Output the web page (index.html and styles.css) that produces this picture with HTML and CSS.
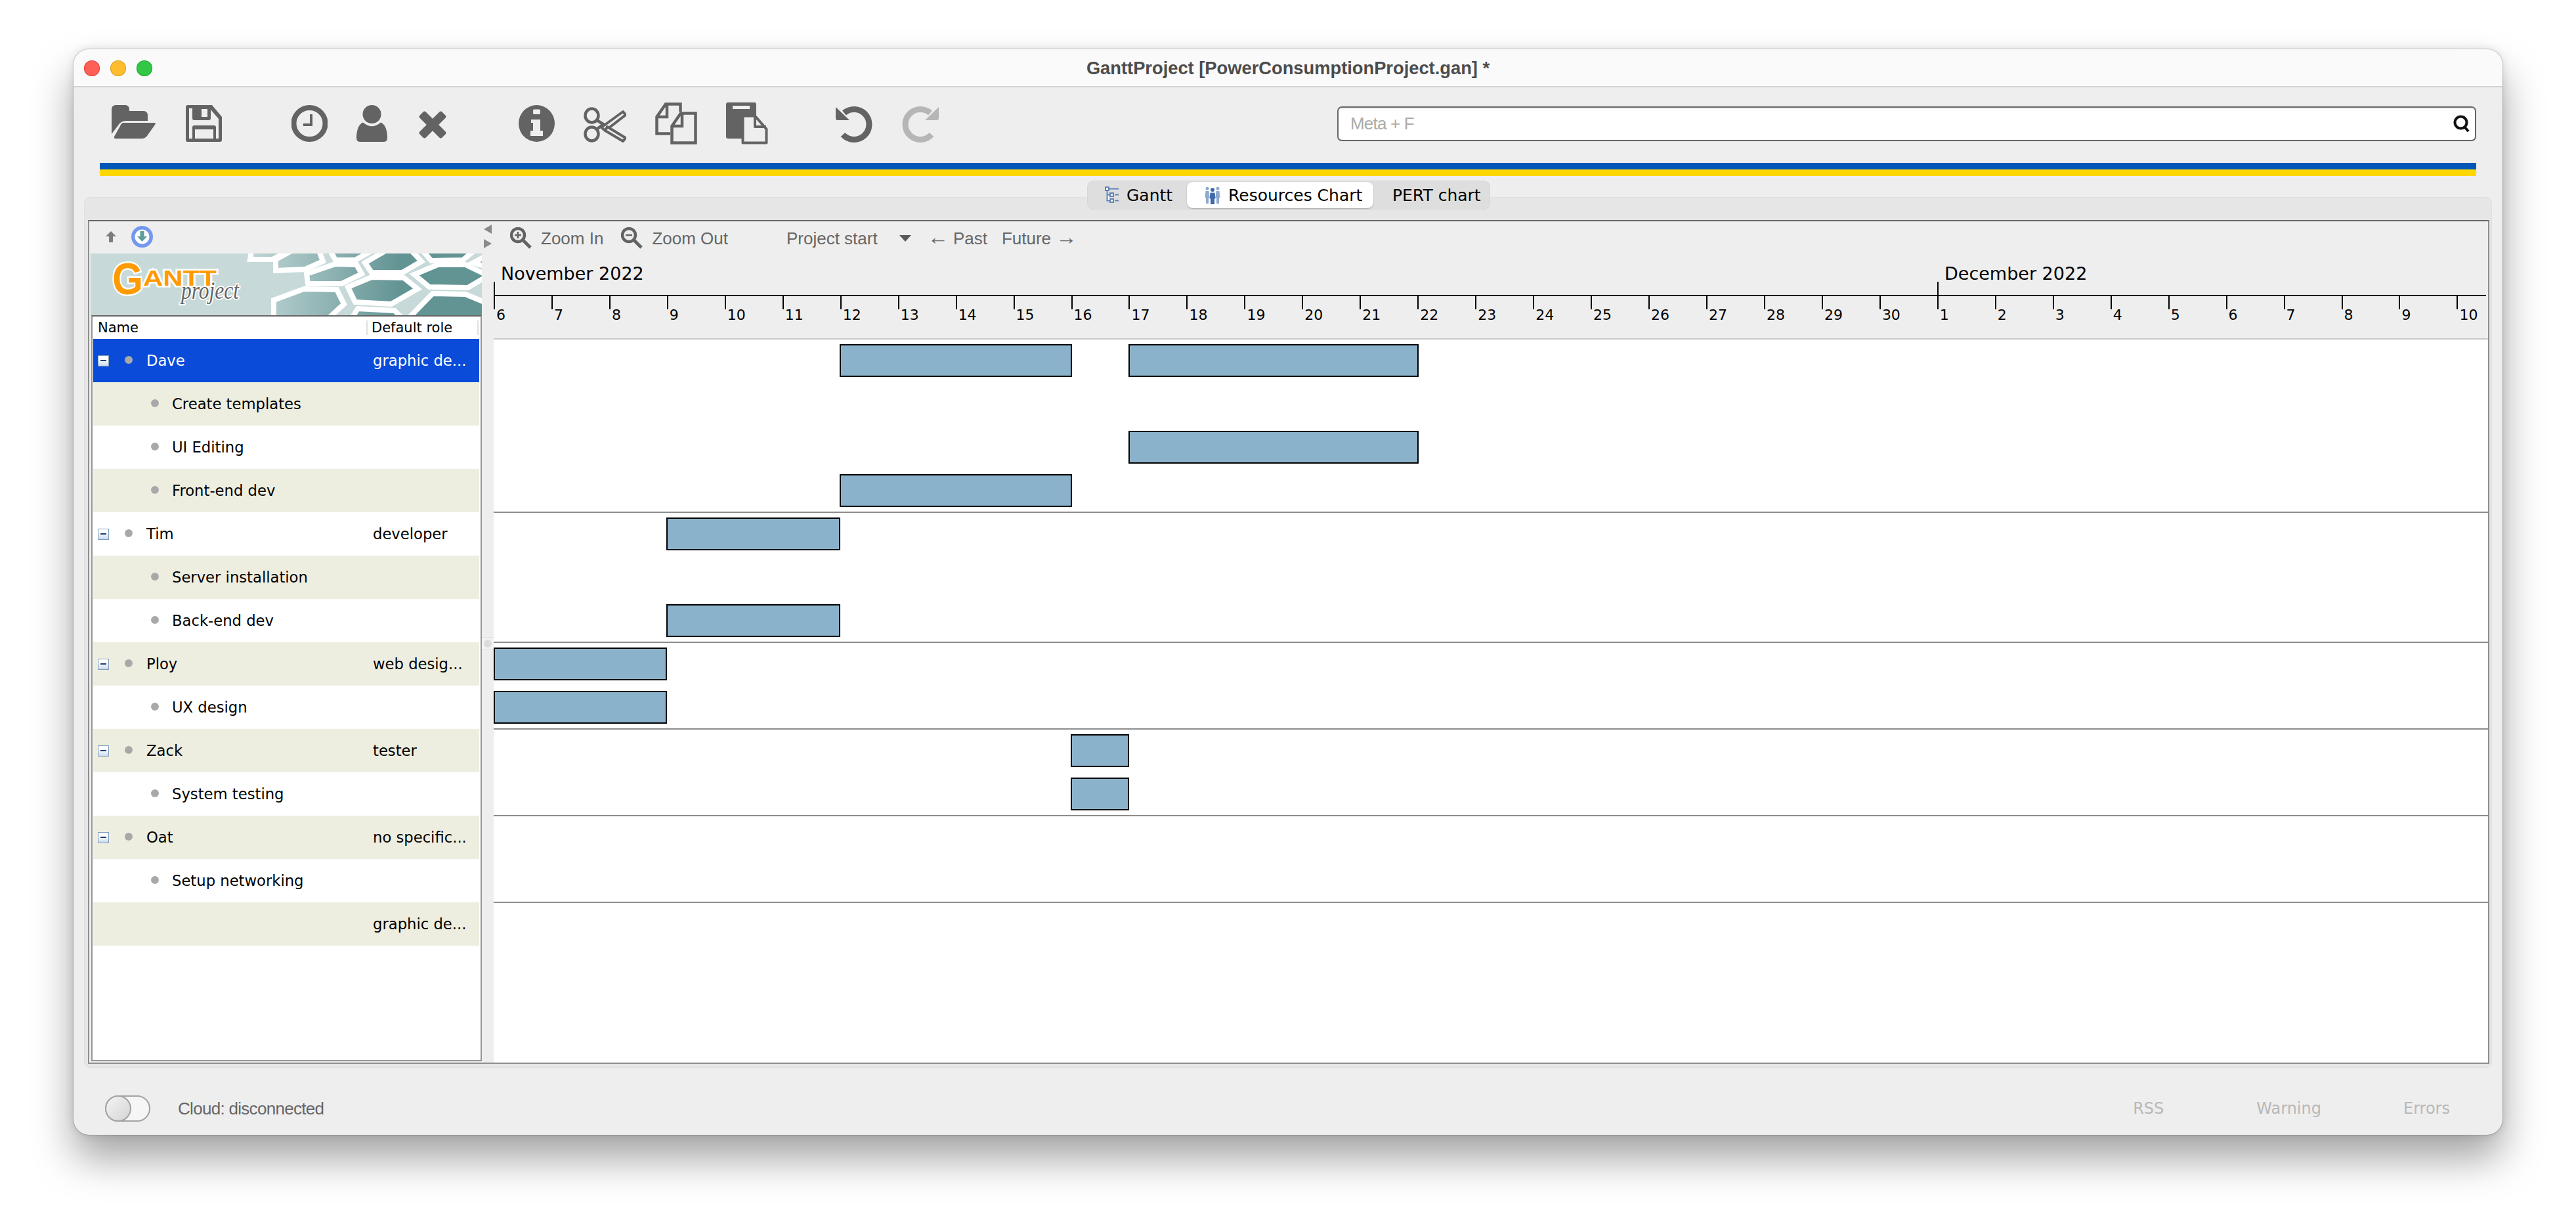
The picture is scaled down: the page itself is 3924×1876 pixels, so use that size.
FILE: index.html
```html
<!DOCTYPE html>
<html lang="en">
<head>
<meta charset="utf-8">
<title>GanttProject</title>
<link rel="stylesheet" href="styles.css">
</head>
<body>
<div class="window">
  <header class="titlebar">
    <div class="lights"><span class="light red"></span><span class="light yellow"></span><span class="light green"></span></div>
    <div class="title">GanttProject [PowerConsumptionProject.gan] *</div>
  </header>

  <div class="toolbar">
    <svg class="ico" width="69" height="64" viewBox="0 0 69 64"><path d="M0 10a6 6 0 0 1 6-6h15a6 6 0 0 1 6 6v3h22a6 6 0 0 1 6 6v9H22q-8 0-12 7L0 48z"/><path d="M18 31h47q3 0 1 3L54 51q-3 4-8 4H6q-3 0-2-3l9-16q2-5 5-5z"/></svg>
    <svg class="ico" width="56" height="64" viewBox="0 0 56 64"><path fill-rule="evenodd" d="M3 4h37l15 18v35q0 3-3 3H3q-3 0-3-3V7q0-3 3-3zM5 9h5v15q0 3 3 3h22q3 0 3-3V11l12 14v30h-4V38q0-3-3-3H13q-3 0-3 3v17H5zM24 10h9v12h-9zM14 41h28v14H14z"/></svg>
    <svg class="ico sep-a" width="55" height="64" viewBox="0 0 55 64"><circle class="ring" cx="27.5" cy="32" r="24"/><path d="M28 18h4v18H18v-4h10z"/></svg>
    <svg class="ico" width="47" height="64" viewBox="0 0 47 64"><ellipse cx="23.5" cy="18" rx="14" ry="14"/><path d="M10 30.5Q23.500 42 37 30.500 46 34 47 52v2q0 6-6 6H6q-6 0-6-6v-2Q1 34 10 30.500z"/></svg>
    <svg class="ico" width="51" height="64" viewBox="0 0 51 64"><rect x="-6.500" y="-24" width="13" height="48" rx="3" transform="translate(25 34) rotate(45)"/><rect x="-6.500" y="-24" width="13" height="48" rx="3" transform="translate(25 34) rotate(-45)"/></svg>
    <svg class="ico sep-a" width="55" height="64" viewBox="0 0 55 64"><path fill-rule="evenodd" d="M27.500 4a27.500 28 0 1 1 0 56 27.500 28 0 0 1 0-56zM24 10.500h7q2 0 2 2V16q0 2-2 2h-7q-2 0-2-2v-3.500q0-2 2-2zM19 26h14v17h4v8H18v-8h4V31h-3z"/></svg>
    <svg class="ico" width="65" height="64" viewBox="0 0 65 64"><ellipse class="line" cx="12.500" cy="20" rx="10" ry="10.500"/><ellipse class="line" cx="12.500" cy="48" rx="10" ry="10.500"/><path class="line" d="M20 27l15 9M20 41l10-8"/><path class="blade" d="M27 38L60 14l4 5-31 24z"/><path class="blade" d="M36 37l28 17-4 5-27-16z"/></svg>
    <svg class="ico" width="64" height="64" viewBox="0 0 64 64"><path class="line" d="M23 47.500H2.500V22L16 2.500h22.500V14M2.500 22H18V3"/><path class="line" d="M25.500 36L39 16.500h22.500v45h-36zM25.500 36H41V17"/></svg>
    <svg class="ico" width="64" height="64" viewBox="0 0 64 64"><path fill-rule="evenodd" d="M3 0h40q3 0 3 3v49q0 3-3 3H3q-3 0-3-3V3q0-3 3-3zM10 5v5h26V5z"/><path class="blade" d="M25.500 61.500v-41H44l17.500 20v21zM44 20v17h17"/></svg>
    <svg class="ico sep-b" width="56" height="64" viewBox="0 0 56 64"><path class="arc" d="M13 16a23 23 0 1 1-2 33"/><path d="M0 7l21 20H3q-3 0-3-3z"/></svg>
    <svg class="ico off" width="57" height="64" viewBox="0 0 57 64"><g transform="translate(57) scale(-1 1)"><path class="arc" d="M13 16a23 23 0 1 1-2 33"/><path d="M0 7l21 20H3q-3 0-3-3z"/></g></svg>
    <div class="search">
      <span class="hint">Meta + F</span>
      <svg width="26" height="27" viewBox="0 0 26 27"><circle class="q" cx="11.500" cy="11.500" r="9"/><path class="q" d="M17 18l6 7"/></svg>
    </div>
  </div>

  <div class="stripe"><div class="blue"></div><div class="gold"></div></div>

  <nav class="tabs">
    <div class="tab tab-gantt">
      <svg width="22" height="26" viewBox="0 0 22 26"><g class="tico"><rect x="1" y="1" width="5" height="5"/><rect x="8" y="10" width="5" height="5"/><rect x="8" y="19" width="5" height="5"/><path d="M3.500 6v15.500H8M3.500 12.500H8M7 3.500h14M15 12.500h6M15 21.500h6"/></g></svg>
      <span>Gantt</span>
    </div>
    <div class="tab tab-res active">
      <svg width="26" height="30" viewBox="0 0 26 30"><g class="tico2"><circle cx="5" cy="5" r="2.500"/><circle cx="21" cy="5" r="2.500"/><path d="M2.500 9h5l1 10H7v9H3v-9H1.500zM18.500 9h5l1 10H23v9h-4v-9h-1.500z"/></g><circle class="tico3" cx="13" cy="7" r="3"/><path class="tico3" d="M9.500 11.500h7l1 9H16V29h-6v-8.500H8.500z"/></svg>
      <span>Resources Chart</span>
    </div>
    <div class="tab tab-pert"><span>PERT chart</span></div>
  </nav>

  <main class="pane">
    <div class="inner">
      <section class="left">
        <div class="left-tools">
          <svg width="18" height="17" viewBox="0 0 18 17"><path class="up" d="M9 0l8 8h-5v9H6V8H1z"/></svg>
          <svg width="33" height="33" viewBox="0 0 33 33"><circle class="dn-ring" cx="16.500" cy="16.500" r="13.750"/><path class="dn-arrow" d="M13.500 8h6v8h4.500l-7.500 8-7.500-8h4.500z"/></svg>
        </div>
        <svg class="logo" width="596" height="94" viewBox="0 0 596 94">
          <defs>
            <linearGradient id="hexfill" gradientUnits="userSpaceOnUse" x1="230" y1="0" x2="470" y2="0"><stop offset="0" stop-color="#c6d9d9"/><stop offset="1" stop-color="#639494"/></linearGradient>
          </defs>
          <rect width="596" height="94" fill="#c7d9d9"/>
          <g class="hexes">
            <polygon points="245,-4 302,-4 277,9 243,9"/>
            <polygon points="282,9 306,-4 348,-4 354,12 327,24 282,26"/>
            <polygon points="365,-4 428,-4 403,10 373,10"/>
            <polygon points="329,31 373,16 405,17 413,31 382,46 331,46"/>
            <polygon points="279,71 325,54 375,55 386,77 361,100 279,100"/>
            <polygon points="418,14 449,-4 489,-4 504,12 475,29 428,29"/>
            <polygon points="506,-4 584,-4 567,10 519,11"/>
            <polygon points="583,14 600,5 600,19"/>
            <polygon points="392,51 428,36 477,37 498,54 458,77 403,74"/>
            <polygon points="493,32 529,17 571,17 600,31 600,37 575,52 516,51"/>
            <polygon points="483,100 521,61 571,62 600,74 600,100"/>
            <polygon points="397,100 407,84 463,87 476,100"/>
          </g>
          <text class="logo-g" x="33" y="62" textLength="47" lengthAdjust="spacingAndGlyphs">G</text>
          <text class="logo-a" x="80" y="49" textLength="112" lengthAdjust="spacingAndGlyphs">ANTT</text>
          <text class="logo-p" x="138" y="69" textLength="88" lengthAdjust="spacingAndGlyphs">project</text>
        </svg>
        <div class="table">
          <div class="thead">
            <div class="th th-name">Name</div>
            <div class="th th-role">Default role</div>
          </div>
          <div class="row sel parent"><div class="name"><i class="tog"></i><i class="dot"></i>Dave</div><div class="role">graphic de...</div></div>
          <div class="row alt child"><div class="name"><i class="dot"></i>Create templates</div></div>
          <div class="row child"><div class="name"><i class="dot"></i>UI Editing</div></div>
          <div class="row alt child"><div class="name"><i class="dot"></i>Front-end dev</div></div>
          <div class="row parent"><div class="name"><i class="tog"></i><i class="dot"></i>Tim</div><div class="role">developer</div></div>
          <div class="row alt child"><div class="name"><i class="dot"></i>Server installation</div></div>
          <div class="row child"><div class="name"><i class="dot"></i>Back-end dev</div></div>
          <div class="row alt parent"><div class="name"><i class="tog"></i><i class="dot"></i>Ploy</div><div class="role">web desig...</div></div>
          <div class="row child"><div class="name"><i class="dot"></i>UX design</div></div>
          <div class="row alt parent"><div class="name"><i class="tog"></i><i class="dot"></i>Zack</div><div class="role">tester</div></div>
          <div class="row child"><div class="name"><i class="dot"></i>System testing</div></div>
          <div class="row alt parent"><div class="name"><i class="tog"></i><i class="dot"></i>Oat</div><div class="role">no specific...</div></div>
          <div class="row child"><div class="name"><i class="dot"></i>Setup networking</div></div>
          <div class="row alt"><div class="name"></div><div class="role">graphic de...</div></div>
        </div>
      </section>

      <div class="splitter">
        <span class="tri tri-l"></span>
        <span class="tri tri-r"></span>
        <span class="knob"><i></i></span>
      </div>

      <section class="right">
        <div class="chart-tools">
          <svg class="zi" width="33" height="33" viewBox="0 0 33 33"><circle class="zc" cx="12" cy="12" r="10"/><path class="zh" d="M20 20l11 11"/><path class="zp" d="M7 12h10M12 7v10"/></svg>
          <span class="zt">Zoom In</span>
          <svg class="zi zi2" width="33" height="33" viewBox="0 0 33 33"><circle class="zc" cx="12" cy="12" r="10"/><path class="zh" d="M20 20l11 11"/><path class="zp" d="M7 12h10"/></svg>
          <span class="zt">Zoom Out</span>
          <span class="ct start">Project start</span>
          <span class="caret"></span>
          <span class="ct past"><span class="arrow">←</span> Past</span>
          <span class="ct future">Future <span class="arrow">→</span></span>
        </div>
        <div class="timeline">
          <div class="months">
            <div class="month nov">November 2022</div>
            <div class="month dec">December 2022</div>
          </div>
          <div class="axis"></div>
          <div class="days">
            <span>6</span><span>7</span><span>8</span><span>9</span><span>10</span><span>11</span><span>12</span><span>13</span><span>14</span><span>15</span><span>16</span><span>17</span><span>18</span><span>19</span><span>20</span><span>21</span><span>22</span><span>23</span><span>24</span><span>25</span><span>26</span><span>27</span><span>28</span><span>29</span><span>30</span><span>1</span><span>2</span><span>3</span><span>4</span><span>5</span><span>6</span><span>7</span><span>8</span><span>9</span><span>10</span>
          </div>
        </div>
        <div class="chart">
          <div class="g-rows">
            <div class="g-row"><b class="bar" style="left:527px;width:354px"></b><b class="bar" style="left:967px;width:442px"></b></div>
            <div class="g-row"></div>
            <div class="g-row"><b class="bar" style="left:967px;width:442px"></b></div>
            <div class="g-row end"><b class="bar" style="left:527px;width:354px"></b></div>
            <div class="g-row"><b class="bar" style="left:263px;width:265px"></b></div>
            <div class="g-row"></div>
            <div class="g-row end"><b class="bar" style="left:263px;width:265px"></b></div>
            <div class="g-row"><b class="bar" style="left:0;width:264px"></b></div>
            <div class="g-row end"><b class="bar" style="left:0;width:264px"></b></div>
            <div class="g-row"><b class="bar" style="left:879px;width:89px"></b></div>
            <div class="g-row end"><b class="bar" style="left:879px;width:89px"></b></div>
            <div class="g-row"></div>
            <div class="g-row end"></div>
          </div>
        </div>
      </section>
    </div>
  </main>

  <footer class="status">
    <span class="switch"><i></i></span>
    <span class="cloud">Cloud: disconnected</span>
    <span class="sl rss">RSS</span>
    <span class="sl warn">Warning</span>
    <span class="sl err">Errors</span>
  </footer>
</div>
</body>
</html>
```
FILE: styles.css
```css
* { box-sizing: border-box; }
html, body { margin: 0; padding: 0; background: #fff; }
body { width: 3924px; height: 1876px; overflow: hidden; padding: 75px 112px 0; font-family: "DejaVu Sans", sans-serif; color: #000; }

.window { width: 3700px; height: 1653px; display: flex; flex-direction: column; background: #eee; border-radius: 24px; overflow: hidden; box-shadow: 0 36px 62px rgba(0,0,0,.36), 0 0 14px rgba(0,0,0,.12), 0 0 2px rgba(0,0,0,.45); }

.titlebar { flex: none; height: 58px; display: flex; align-items: center; position: relative; justify-content: center; background: #fafafa; border-bottom: 2px solid #d2d2d2; }
.lights { position: absolute; left: 16px; top: 17px; display: flex; gap: 16px; }
.light { width: 24px; height: 24px; border-radius: 50%; }
.red { background: #ff5f57; box-shadow: inset 0 0 0 1px #e0443e; }
.yellow { background: #febc2e; box-shadow: inset 0 0 0 1px #dea123; }
.green { background: #33c748; box-shadow: inset 0 0 0 1px #1aab29; }
.title { font: bold 27.3px "Liberation Sans", sans-serif; color: #4c4c4c; margin-left: 0; margin-top: 1px; }

.toolbar { flex: none; height: 115px; display: flex; gap: 44px; align-items: flex-start; padding: 23px 40px 0 58px; }
.ico { flex: none; fill: #636363; }
.sep-a { margin-left: 61px; }
.sep-b { margin-left: 59px; }
.ico .ring { fill: none; stroke: #636363; stroke-width: 8; }
.ico .line { fill: none; stroke: #636363; stroke-width: 4.5; }
.ico .blade { fill: #eee; stroke: #636363; stroke-width: 4; stroke-linejoin: round; }
.ico .arc { fill: none; stroke: #636363; stroke-width: 9; }
.off { fill: #b6b6b6; }
.off .arc { stroke: #b6b6b6; }

.search { flex: none; margin-left: auto; margin-top: 6px; width: 1735px; height: 53px; display: flex; align-items: center; justify-content: space-between; padding: 0 7px 0 18px; background: #fff; border: 2px solid #666; border-radius: 7px; box-shadow: inset 0 3px 3px -2px rgba(0,0,0,.12); }
.hint { font: 26px "Liberation Sans", sans-serif; letter-spacing: -.8px; color: #ababab; }
.q { fill: none; stroke: #111; stroke-width: 4; }

.stripe { flex: none; margin: 0 40px; }
.blue { height: 10px; background: #0057b7; }
.gold { height: 10px; background: #ffd700; }

.tabs { flex: none; position: relative; z-index: 1; margin: 7px auto 0; transform: translateX(1px); height: 44px; display: flex; padding: 2px 0; background: #dedede; border-radius: 10px; box-shadow: inset 0 0 0 1px #d6d6d6; font-size: 25px; }
.tab { flex: none; display: flex; align-items: center; height: 40px; border-radius: 9px; white-space: nowrap; }
.tab-gantt { width: 152px; gap: 11px; padding-left: 27px; }
.tab-res { width: 284px; gap: 11px; padding-left: 26px; }
.tab-pert { width: 178px; padding-left: 29px; }
.active { background: #fff; box-shadow: 0 1px 2px rgba(0,0,0,.25); }
.tico { fill: #fff; stroke: #5f83b6; stroke-width: 2; }
.tico2 { fill: #8fa9cf; }
.tico3 { fill: #3f69a8; }

.pane { flex: 1; min-height: 0; margin: -19px 16px 0; padding: 35px 4px 6px 6px; background: #e6e6e6; border-radius: 9px; box-shadow: inset 0 0 0 1px #e0e0e0; display: flex; }
.inner { flex: 1; min-width: 0; display: flex; background: #eee; border: 2px solid #8f8f8f; border-top-color: #666; }

.left { flex: none; width: 598px; display: flex; flex-direction: column; padding-bottom: 2px; }
.left-tools { flex: none; height: 49px; display: flex; align-items: center; gap: 22px; padding: 0 0 2px 24px; }
.up { fill: #7d7d7d; }
.dn-ring { fill: #fff; stroke: #7398ee; stroke-width: 5.5; }
.dn-arrow { fill: #5f9c9c; }

.logo { flex: none; display: block; margin-left: 2px; }
.hexes polygon { fill: url(#hexfill); stroke: #fff; stroke-width: 8; stroke-linejoin: miter; }
.logo-g { font: bold 68px "Liberation Sans", sans-serif; fill: #ff9a00; stroke: #fff; stroke-width: 5px; paint-order: stroke; }
.logo-a { font: bold 34px "Liberation Sans", sans-serif; fill: #ff9a00; stroke: #fff; stroke-width: 5px; paint-order: stroke; }
.logo-p { font: italic 37px "Liberation Serif", serif; fill: #666; stroke: #fff; stroke-width: 4px; paint-order: stroke; }

.table { flex: 1; min-height: 0; margin-left: 3px; padding: 0 2px 0 1px; background: #fff; border: 2px solid #969696; border-top-color: #666; font-size: 22.7px; }
.thead { height: 34px; display: flex; align-items: center; font-size: 21px; }
.th { height: 22px; line-height: 22px; border-right: 2px solid #e0e0e0; white-space: nowrap; }
.th-name { width: 418px; padding-left: 7px; }
.th-role { flex: 1; padding-left: 6px; margin-right: 1px; }
.row { height: 66px; display: flex; align-items: center; white-space: nowrap; }
.alt { background: #eeeee0; }
.sel { background: #0a4bd9; color: #fff; }
.name { flex: none; width: 417px; display: flex; align-items: center; }
.role { padding-left: 9px; }
.parent .name { padding-left: 7px; }
.child .name { padding-left: 88px; }
.tog { flex: none; width: 17px; height: 17px; margin-right: 24px; display: flex; align-items: center; justify-content: center; border: 1px solid #7f9db9; background: linear-gradient(#fff 40%, #c9d8ee); }
.tog::before { content: ""; width: 9px; height: 2px; background: #1d3f70; }
.dot { flex: none; width: 12px; height: 12px; margin-right: 21px; margin-top: -3px; border-radius: 50%; background: radial-gradient(circle at 45% 45%, #a8a8a8 55%, #c4c4c4); }
.child .dot { margin-right: 20px; }

.splitter { flex: none; width: 18px; display: flex; flex-direction: column; align-items: center; padding-top: 5px; }
.tri { width: 0; height: 0; border-style: solid; border-color: transparent; }
.tri-l { border-width: 7px 12px 7px 0; border-right-color: #8a8a8a; }
.tri-r { margin-top: 8px; border-width: 7px 0 7px 12px; border-left-color: #8a8a8a; }
.knob { margin-top: 592px; width: 100%; height: 19px; display: flex; align-items: center; justify-content: center; border-top: 1px solid #e2e2e2; border-bottom: 1px solid #e2e2e2; background: #f2f2f2; }
.knob i { width: 12px; height: 12px; border-radius: 50%; background: #dcdcdc; }

.right { flex: 1; min-width: 0; display: flex; flex-direction: column; overflow: hidden; }
.chart-tools { flex: none; height: 49px; display: flex; align-items: center; padding: 3px 0 0 25px; font: 26px "Liberation Sans", sans-serif; color: #666; white-space: nowrap; }
.zi { flex: none; margin-right: 14px; margin-top: -2px; }
.zi2 { margin-left: 27px; }
.zc { fill: none; stroke: #636363; stroke-width: 4.5; }
.zh { fill: none; stroke: #636363; stroke-width: 5; }
.zp { fill: none; stroke: #636363; stroke-width: 2.5; }
.start { margin-left: 89px; }
.caret { margin-left: 33px; width: 0; height: 0; border-style: solid; border-width: 10px 9px 0; border-color: #5a5a5a transparent transparent; }
.past { margin-left: 25px; }
.future { margin-left: 22px; }
.arrow { font-size: 32px; line-height: 0; }

.timeline { flex: none; height: 129px; }
.months { height: 63px; display: flex; }
.month { position: relative; flex: none; font-size: 27px; line-height: 34px; padding: 14px 0 0 11px; white-space: nowrap; }
.month::before { content: ""; position: absolute; left: 0; bottom: 0; width: 2px; height: 20px; background: #000; }
.nov { width: 2199px; }
.axis { height: 2px; margin-right: 3px; background: #000; }
.days { height: 64px; display: flex; font-size: 22px; line-height: 18px; }
.days span { position: relative; flex: none; width: 87.96px; padding: 20px 0 0 4px; }
.days span::before { content: ""; position: absolute; left: 0; top: 0; width: 2px; height: 20px; background: #000; }

.chart { flex: 1; min-height: 0; background: #fff; border-top: 2px solid #c8c8c8; }
.g-rows { margin-top: -1px; }
.g-row { position: relative; height: 66px; }
.end::after { content: ""; position: absolute; left: 0; right: 0; bottom: -1px; height: 2px; background: #8c8c8c; }
.bar { position: absolute; top: 8px; height: 50px; background: #8bb2cb; border: 2px solid #000; }

.status { flex: none; height: 102px; display: flex; align-items: center; padding: 22px 80px 0 48px; font-size: 24px; white-space: nowrap; }
.switch { flex: none; position: relative; width: 69px; height: 40px; border: 2px solid #a3a3a3; border-radius: 20px; background: #f6f6f6; }
.switch i { position: absolute; left: -2px; top: -2px; width: 40px; height: 40px; border-radius: 50%; border: 2px solid #a3a3a3; background: linear-gradient(135deg, #f4f4f4, #d4d4d4); }
.cloud { margin-left: 42px; font: 26px "Liberation Sans", sans-serif; letter-spacing: -.7px; color: #666; }
.sl { color: #b8b8b8; }
.rss { margin-left: auto; }
.warn { margin-left: 141px; }
.err { margin-left: 125px; }
```
